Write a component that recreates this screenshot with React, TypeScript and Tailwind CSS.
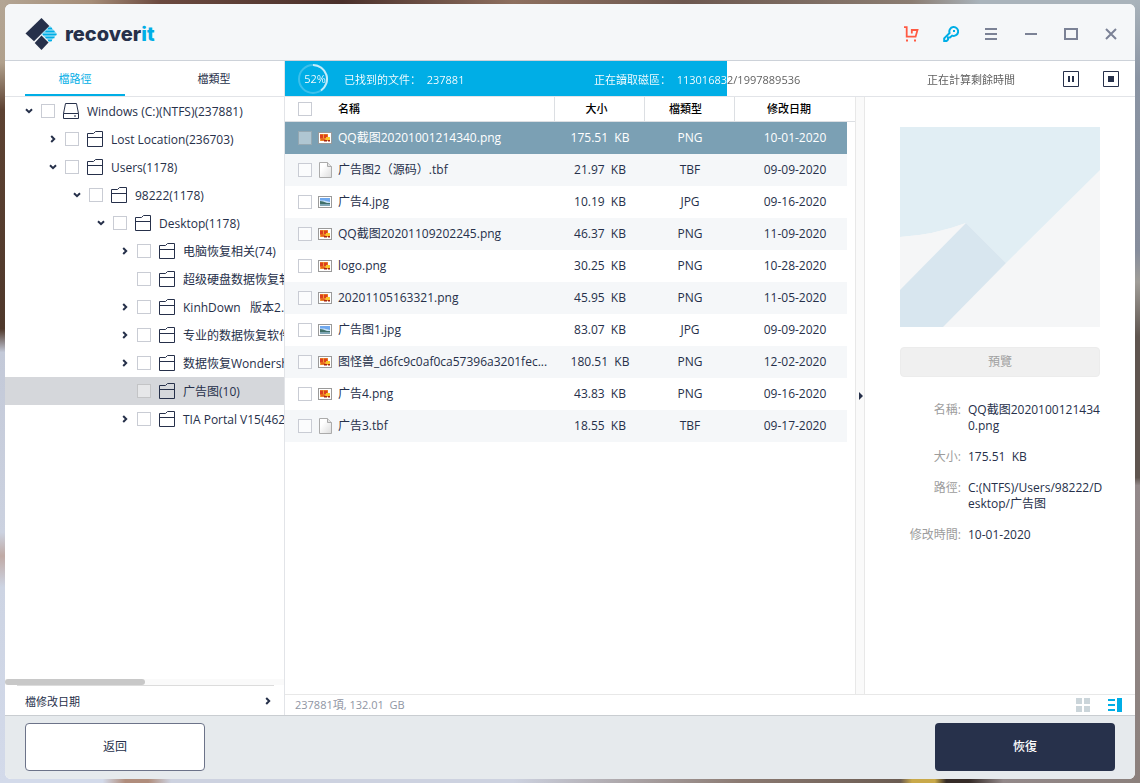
import { useState } from "react";
import type { ReactNode } from "react";

type TreeNode = {
  label: string;
  level: number;
  state: "open" | "closed" | "leaf";
  drive?: boolean;
  selected?: boolean;
};

type FileRow = {
  name: string;
  size: string;
  type: "PNG" | "JPG" | "TBF";
  date: string;
};

const tree: TreeNode[] = [
  { label: "Windows (C:)(NTFS)(237881)", level: 0, state: "open", drive: true },
  { label: "Lost Location(236703)", level: 1, state: "closed" },
  { label: "Users(1178)", level: 1, state: "open" },
  { label: "98222(1178)", level: 2, state: "open" },
  { label: "Desktop(1178)", level: 3, state: "open" },
  { label: "电脑恢复相关(74)", level: 4, state: "closed" },
  { label: "超级硬盘数据恢复软件", level: 4, state: "leaf" },
  { label: "KinhDown \u00a0 版本2.0", level: 4, state: "closed" },
  { label: "专业的数据恢复软件", level: 4, state: "closed" },
  { label: "数据恢复Wondershare", level: 4, state: "closed" },
  { label: "广告图(10)", level: 4, state: "leaf", selected: true },
  { label: "TIA Portal V15(462)", level: 4, state: "closed" },
];

const files: FileRow[] = [
  { name: "QQ截图20201001214340.png", size: "175.51 \u00a0KB", type: "PNG", date: "10-01-2020" },
  { name: "广告图2（源码）.tbf", size: "21.97 \u00a0KB", type: "TBF", date: "09-09-2020" },
  { name: "广告4.jpg", size: "10.19 \u00a0KB", type: "JPG", date: "09-16-2020" },
  { name: "QQ截图20201109202245.png", size: "46.37 \u00a0KB", type: "PNG", date: "11-09-2020" },
  { name: "logo.png", size: "30.25 \u00a0KB", type: "PNG", date: "10-28-2020" },
  { name: "20201105163321.png", size: "45.95 \u00a0KB", type: "PNG", date: "11-05-2020" },
  { name: "广告图1.jpg", size: "83.07 \u00a0KB", type: "JPG", date: "09-09-2020" },
  { name: "图怪兽_d6fc9c0af0ca57396a3201fec...", size: "180.51 \u00a0KB", type: "PNG", date: "12-02-2020" },
  { name: "广告4.png", size: "43.83 \u00a0KB", type: "PNG", date: "09-16-2020" },
  { name: "广告3.tbf", size: "18.55 \u00a0KB", type: "TBF", date: "09-17-2020" },
];

const details = [
  { label: "名稱:", value: "QQ截图20201001214340.png" },
  { label: "大小:", value: "175.51 \u00a0KB" },
  { label: "路徑:", value: "C:(NTFS)/Users/98222/Desktop/广告图" },
  { label: "修改時間:", value: "10-01-2020" },
];

const indent = ["pl-5", "pl-11", "pl-17", "pl-23", "pl-29"];

function CheckBox({ label, muted }: { label: string; muted?: boolean }) {
  return (
    <input
      type="checkbox"
      aria-label={label}
      className={`size-3.5 shrink-0 appearance-none border checked:bg-[#00aee6] ${
        muted ? "border-black/15 bg-white/40" : "border-[#c9ccd4] bg-white/60"
      }`}
    />
  );
}

function Chevron({ open }: { open?: boolean }) {
  return (
    <svg viewBox="0 0 8 8" className="size-2 shrink-0" fill="none" stroke="#26304a" strokeWidth="2">
      {open ? <path d="M1 2.200 4 5.200 7 2.200" /> : <path d="M2.200 1 5.200 4 2.200 7" />}
    </svg>
  );
}

function FolderIcon() {
  return (
    <svg viewBox="0 0 16 16" className="size-4 shrink-0" fill="none" stroke="#26304a">
      <path d="M.5 15.5V2.5H6.5L8.5.5H15.5V15.5ZM.5 6.5H15.5" />
    </svg>
  );
}

function DriveIcon() {
  return (
    <svg viewBox="0 0 16 16" className="size-4 shrink-0" fill="none" stroke="#26304a">
      <path d="M.5 15.5V10.5L2.5.5H13.5L15.5 10.5V15.5ZM.5 10.5H15.5M11 13H13" />
    </svg>
  );
}

function FileIcon({ type }: { type: FileRow["type"] }) {
  if (type === "TBF") {
    return (
      <svg viewBox="0 0 14 16" className="h-4 w-3.5 shrink-0">
        <defs>
          <linearGradient id="paper" x1="0" y1="0" x2="1" y2="1">
            <stop offset="0.3" stopColor="#ffffff" />
            <stop offset="1" stopColor="#dcdcdc" />
          </linearGradient>
        </defs>
        <path d="M1.5.5H9.5L13.5 4.5V15.5H1.5Z" fill="url(#paper)" stroke="#ababab" />
        <path d="M9.5.5V4.5H13.5" fill="#e4e4e4" stroke="#ababab" />
      </svg>
    );
  }
  if (type === "JPG") {
    return (
      <svg viewBox="0 0 14 12" className="h-3 w-3.5 shrink-0">
        <rect x=".5" y=".5" width="13" height="11" fill="#fff" stroke="#9a9a9a" />
        <path d="M2 2H12V10H2Z" fill="#6fa8ee" />
        <path d="M2 4.5H6L12 6V7H2Z" fill="#c9e2f7" />
        <path d="M2 5 5 5.5 9 7H12V8H2Z" fill="#3f6f68" />
        <path d="M2 8H12V10H2Z" fill="#7fa6b5" />
      </svg>
    );
  }
  return (
    <svg viewBox="0 0 14 12" className="h-3 w-3.5 shrink-0">
      <rect x=".5" y=".5" width="13" height="11" fill="#fff" stroke="#9a9a9a" />
      <path d="M2 2H10V5H12V9H2Z" fill="#f0a030" />
      <path d="M2 2.5H5V6.5H2ZM6 2.5H9.5V6H6Z" fill="#dc3f1e" />
      <path d="M3 6.5H7V8.5H3Z" fill="#e8641f" />
      <path d="M8 5H12V8H8Z" fill="#f8c62c" />
      <path d="M6 8H9V9.5H6ZM10 8H12V9.5H10Z" fill="#a82512" />
    </svg>
  );
}

function Logo() {
  return (
    <div className="flex items-center gap-2">
      <svg viewBox="0 0 32 32" className="size-8">
        <path d="M16.500 0 24.400 8 9 23.200 .5 15.500Z" fill="#26304a" />
        <path d="M16.500 17.500 23.500 24.500 16.500 32 9.700 25Z" fill="#26304a" />
        <path d="M16.500 16 25 7.800 32 16 25 24.200Z" fill="#7fd6f2" />
        <path
          d="M23 10.500H27M20.500 13.500H29.500M18 16.500H31.500M20.500 19.500H29.500M23 22.500H27"
          stroke="#00aee6"
          strokeWidth="1.600"
        />
      </svg>
      <span className="font-[Inter,sans-serif] text-xl leading-6 font-extrabold text-[#26304a]">
        recover<span className="text-[#00aee6]">it</span>
      </span>
    </div>
  );
}

function HeaderButton({ label, children }: { label: string; children: ReactNode }) {
  return (
    <button type="button" aria-label={label} className="flex h-10 w-10 items-center justify-center">
      <svg viewBox="0 0 16 16" className="size-4" fill="none" stroke="#7b8296" strokeWidth="2">
        {children}
      </svg>
    </button>
  );
}

function Header() {
  return (
    <header className="flex h-[57px] shrink-0 items-center justify-between border-b border-[#cdd2d9] bg-[#f5f7f9] pt-1 pr-1 pl-5">
      <Logo />
      <div className="flex">
        <HeaderButton label="購物車">
          <path d="M1 1.200H3.700V10.700H12.600L14.500 4H8.800V7.500" stroke="#ff5a43" strokeWidth="1.800" />
          <path d="M3 14.500H5M11 14.500H13" stroke="#ff5a43" />
        </HeaderButton>
        <HeaderButton label="註冊">
          <g stroke="#00aee6">
            <path d="M6.600 7A4.400 4.400 0 1 1 9.200 9.600L7 11.600H5V13.600L3.600 15H1.200V12.400Z" />
            <path d="M10 5H12" />
          </g>
        </HeaderButton>
        <HeaderButton label="選單">
          <path d="M2 3H14M2 8H14M2 13H14" />
        </HeaderButton>
        <HeaderButton label="最小化">
          <path d="M2 8H14" />
        </HeaderButton>
        <HeaderButton label="最大化">
          <path d="M2 3H14V13H2Z" />
        </HeaderButton>
        <HeaderButton label="關閉">
          <path d="M3 3 13 13M13 3 3 13" />
        </HeaderButton>
      </div>
    </header>
  );
}

function Tabs() {
  return (
    <div role="tablist" className="flex h-9 justify-between border-b border-[#e2e4e8] px-5 text-[11px]">
      <button
        type="button"
        role="tab"
        aria-selected="true"
        className="w-[100px] border-b-2 border-[#00aee6] pt-1 text-[#00aee6]"
      >
        檔路徑
      </button>
      <button type="button" role="tab" aria-selected="false" className="w-[100px] pt-0.5 text-[#26304a]">
        檔類型
      </button>
    </div>
  );
}

function Tree() {
  return (
    <ul className="flex-1 overflow-hidden text-[#26304a]">
      {tree.map((node) => (
        <li
          key={node.label}
          className={`flex h-7 items-center gap-2 whitespace-nowrap ${indent[node.level]} ${
            node.selected ? "bg-[#d5d7db]" : ""
          }`}
        >
          {node.state === "leaf" ? <span className="w-2 shrink-0" /> : <Chevron open={node.state === "open"} />}
          <CheckBox label={node.label} muted={node.selected} />
          {node.drive ? <DriveIcon /> : <FolderIcon />}
          <span className="pt-0.5">{node.label}</span>
        </li>
      ))}
    </ul>
  );
}

function Sidebar() {
  return (
    <aside className="flex w-[280px] shrink-0 flex-col border-r border-[#e2e4e8]">
      <Tabs />
      <Tree />
      <div className="h-1.5 bg-[#fafafa]">
        <div className="h-full w-1/2 rounded-full bg-[#c8c8c8]" />
      </div>
      <button
        type="button"
        className="mr-2.5 ml-3 flex h-[30px] items-center justify-between border-t border-[#dcdcdc] pr-0.5 pl-2 text-[11px] text-[#26304a]"
      >
        <span className="pt-1">檔修改日期</span>
        <Chevron />
      </button>
    </aside>
  );
}

function StatusBar({ progress }: { progress: number }) {
  return (
    <div
      role="progressbar"
      aria-label="掃描進度"
      aria-valuenow={progress}
      className="h-9 shrink-0 border-b border-[#e2e4e8]"
      style={{ background: `linear-gradient(to right, #00aee6 ${progress}%, #ffffff ${progress}%)` }}
    >
      <div
        className="flex h-full items-center pr-4 pl-[13px] text-[11px] text-transparent"
        style={{
          backgroundImage: `linear-gradient(to right, #ffffff ${progress}%, #5a5a5a ${progress}%)`,
          backgroundClip: "text",
          WebkitBackgroundClip: "text",
        }}
      >
        <div className="grid size-[30px] shrink-0 place-items-center">
          <svg viewBox="0 0 30 30" className="col-start-1 row-start-1 size-[30px]" fill="none" strokeWidth="2">
            <circle cx="15" cy="15" r="14" stroke="#3cc0eb" />
            <path d="M15 1A14 14 0 0 1 23 26.500" stroke="#c4ecfa" />
          </svg>
          <span className="col-start-1 row-start-1 pt-0.5 pl-1">{progress}%</span>
        </div>
        <span className="w-[250px] shrink-0 pt-1 pl-4 whitespace-nowrap">已找到的文件：&nbsp; 237881</span>
        <span className="flex-1 pt-1 pl-4 whitespace-nowrap">正在讀取磁區：&nbsp; 113016832/1997889536</span>
        <span className="shrink-0 pt-1">正在計算剩餘時間</span>
        <button type="button" aria-label="暫停" className="ml-12">
          <svg viewBox="0 0 16 16" className="size-4" fill="#26304a">
            <path d="M.5.5H15.500V15.500H.5Z" fill="none" stroke="#26304a" />
            <path d="M5 5H7V11H5ZM9 5H11V11H9Z" />
          </svg>
        </button>
        <button type="button" aria-label="停止" className="ml-6">
          <svg viewBox="0 0 16 16" className="size-4" fill="#26304a">
            <path d="M.5.5H15.500V15.500H.5Z" fill="none" stroke="#26304a" />
            <path d="M5 5H11V11H5Z" />
          </svg>
        </button>
      </div>
    </div>
  );
}

function FileTable({ selected, onSelect }: { selected: number; onSelect: (index: number) => void }) {
  return (
    <table className="w-full table-fixed border-separate border-spacing-0 text-center text-[#26304a]">
      <colgroup>
        <col />
        <col className="w-[90px]" />
        <col className="w-[90px]" />
        <col className="w-[112px]" />
        <col className="w-2" />
      </colgroup>
      <thead>
        <tr className="h-[25px] text-[11px] text-black">
          <th className="border-r border-b border-[#dcdfe3] p-0 font-medium">
            <div className="flex items-center gap-[26px] pl-[13px]">
              <CheckBox label="全選" />
              名稱
            </div>
          </th>
          <th className="border-r border-b border-[#dcdfe3] py-0 pr-1.5 pl-0 font-medium">大小</th>
          <th className="border-r border-b border-[#dcdfe3] py-0 pr-2 pl-0 font-medium">檔類型</th>
          <th className="border-b border-[#dcdfe3] py-0 pr-3 pl-0 font-medium" colSpan={2}>
            修改日期
          </th>
        </tr>
      </thead>
      <tbody>
        {files.map((file, index) => {
          const active = index === selected;
          const shade = active ? "bg-[#7ba0b4] text-white" : index % 2 ? "bg-[#f5f7f9]" : "bg-white";
          return (
            <tr key={file.name} className="h-8" onClick={() => onSelect(index)}>
              <td className={`p-0 ${shade}`}>
                <div className="flex items-center gap-1.5 pl-[13px] whitespace-nowrap">
                  <CheckBox label={file.name} muted={active} />
                  <FileIcon type={file.type} />
                  {file.name}
                </div>
              </td>
              <td className={`p-0 ${shade}`}>{file.size}</td>
              <td className={`p-0 ${shade}`}>{file.type}</td>
              <td className={`p-0 pl-2 ${shade}`}>{file.date}</td>
              <td className="p-0" />
            </tr>
          );
        })}
      </tbody>
    </table>
  );
}

function Preview() {
  return (
    <aside className="w-[270px] shrink-0 px-[35px] pt-[30px]">
      <svg viewBox="0 0 200 200" className="block w-full">
        <path d="M0 0H200V200H0Z" fill="#f5f6f7" />
        <path d="M0 0H200V43L106 136 66 96Q34 108 0 110Z" fill="#e1eef4" />
        <path d="M0 110Q34 108 66 96L0 163Z" fill="#f5f6f7" />
        <path d="M66 96 106 136 43 200H0V163Z" fill="#d8e6ef" />
      </svg>
      <button type="button" disabled className="mt-5 h-[30px] w-full rounded-sm border border-[#ececec] bg-[#f0f0f0] text-[#a0a0a0]">
        預覽
      </button>
      <dl className="mt-[25px] -mr-2 flex flex-col gap-[15px] leading-4">
        {details.map((item) => (
          <div key={item.label} className="flex gap-[7px]">
            <dt className="w-[61px] shrink-0 text-right whitespace-nowrap text-[#9c9c9c]">{item.label}</dt>
            <dd className="min-w-0 flex-1 break-all text-[#26304a]">{item.value}</dd>
          </div>
        ))}
      </dl>
    </aside>
  );
}

function ViewBar() {
  return (
    <div className="flex h-[21px] shrink-0 items-center justify-between border-t border-[#e8e8e8] pr-[13px] pl-2.5 text-[11px] text-[#8f95a3]">
      <span>237881項, 132.01 &nbsp;GB</span>
      <div className="flex gap-[18px]">
        <button type="button" aria-label="縮圖檢視">
          <svg viewBox="0 0 14 14" className="size-3.5" fill="#cbd5da">
            <path d="M0 0H6V6H0ZM8 0H14V6H8ZM0 8H6V14H0ZM8 8H14V14H8Z" />
          </svg>
        </button>
        <button type="button" aria-label="清單檢視">
          <svg viewBox="0 0 14 14" className="size-3.5" fill="#00aee6">
            <path d="M0 1H7V3H0ZM0 6H7V8H0ZM0 11H7V13H0ZM9 0H14V14H9Z" />
          </svg>
        </button>
      </div>
    </div>
  );
}

export default function App() {
  const [selected, setSelected] = useState(0);

  return (
    <div className="flex min-h-screen bg-[#8d8380] px-[5px] pt-1 pb-1 font-['Open_Sans','Noto_Sans_CJK_SC',sans-serif] text-xs [background:linear-gradient(#b3a594_0%,#b0a08c_8%,#5d4232_14%,#4f382b_42%,#c3c9d8_45%,#ccd2e0_68%,#c0aaa5_71%,#cdd4e3_75%,#d3daea_100%)_left/5px_100%_no-repeat,linear-gradient(#a9b3bb_0%,#8a94a3_10%,#868d9c_32%,#a09d98_36%,#5f554f_43%,#5f554f_61%,#93898a_62%,#8b807c_100%)_right/5px_100%_no-repeat,linear-gradient(to_right,#b3a594_0%,#a58d78_8%,#6b4a40_14%,#4a302b_30%,#8d6f5f_45%,#6d5850_60%,#8b7d72_80%,#a9b3bb_86%,#a9b3bb_100%)_top/100%_10px_no-repeat,linear-gradient(to_right,#d3daea_0%,#d3daea_9%,#b08d7c_11%,#b08d7c_13%,#cdd2e0_15%,#cdd2e0_45%,#8b7a72_65%,#6b5c52_79%,#c9a94a_80%,#c9a94a_82%,#352b27_83%,#352b27_85%,#93898a_88%,#8b807c_100%)_bottom/100%_10px_no-repeat]">
      <div className="flex min-w-0 flex-1 flex-col overflow-hidden rounded-md bg-white">
        <Header />
        <div className="flex flex-1">
          <Sidebar />
          <div className="flex min-w-0 flex-1 flex-col">
            <StatusBar progress={52} />
            <div className="flex flex-1">
              <main className="min-w-0 flex-1">
                <FileTable selected={selected} onSelect={setSelected} />
              </main>
              <button
                type="button"
                aria-label="收合預覽"
                className="flex w-2.5 shrink-0 items-center justify-end border-x border-[#e8e8e8] bg-[#fafafa]"
              >
                <svg viewBox="0 0 6 8" className="h-2 w-1.5 shrink-0" fill="#26304a">
                  <path d="M1 0 5 4 1 8Z" />
                </svg>
              </button>
              <Preview />
            </div>
            <ViewBar />
          </div>
        </div>
        <footer className="flex h-16 shrink-0 items-center justify-between border-t border-[#c9cdd1] bg-[#e6eaed] px-5 pb-0.5">
          <button type="button" className="h-12 w-[180px] rounded-sm border border-[#6c7389] bg-white text-[#26304a]">
            返回
          </button>
          <button type="button" className="h-12 w-[180px] rounded-sm bg-[#27314b] font-medium text-white">
            恢復
          </button>
        </footer>
      </div>
    </div>
  );
}
